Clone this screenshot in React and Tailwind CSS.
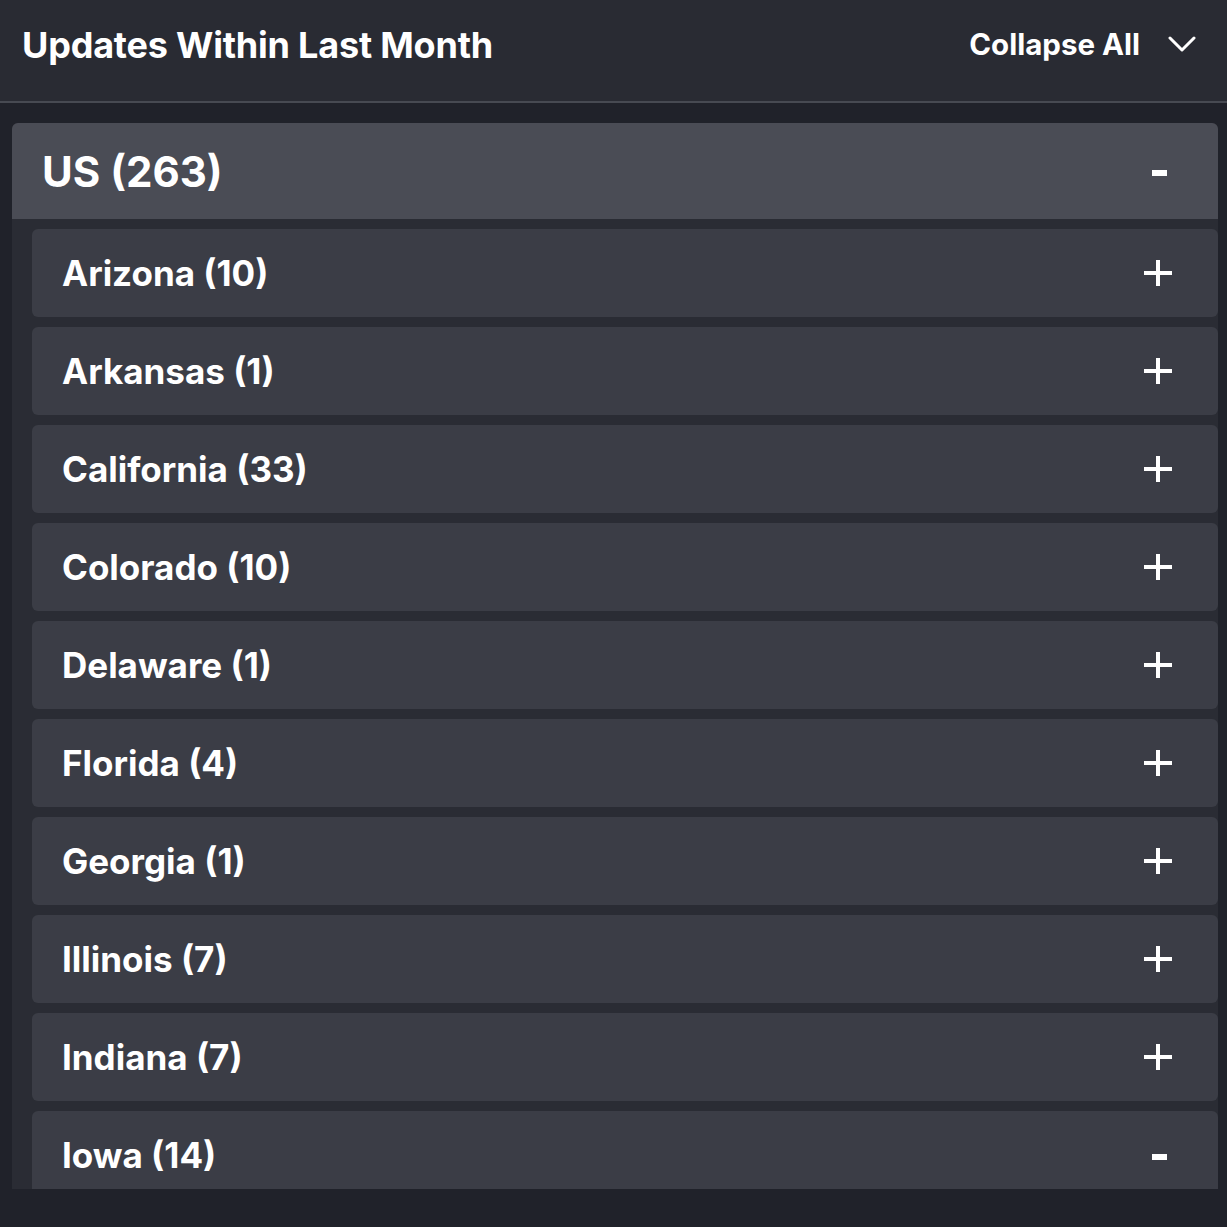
const states = [
  { name: 'Arizona', count: 10 },
  { name: 'Arkansas', count: 1 },
  { name: 'California', count: 33 },
  { name: 'Colorado', count: 10 },
  { name: 'Delaware', count: 1 },
  { name: 'Florida', count: 4 },
  { name: 'Georgia', count: 1 },
  { name: 'Illinois', count: 7 },
  { name: 'Indiana', count: 7 },
  { name: 'Iowa', count: 14, open: true },
];

const Plus = () => (
  <div className="relative w-[28px] h-[26px]">
    <div className="absolute left-0 right-0 top-[11px] h-[4px] bg-white" />
    <div className="absolute top-0 bottom-0 left-[12px] w-[4px] bg-white" />
  </div>
);

const Minus = () => (
  <div className="w-[28px] flex justify-end pr-[5px]">
    <div className="w-[15px] h-[6px] bg-white mt-[4px]" />
  </div>
);

const Chevron = () => (
  <svg width="28" height="17" viewBox="0 0 28 17" fill="none">
    <polyline points="2,2 14,14 26,2" stroke="white" strokeWidth="3" strokeLinecap="round" strokeLinejoin="round" />
  </svg>
);

const App = () => {
  return (
    <div
      className="w-[1227px] h-[1227px] bg-[#20222a] text-white overflow-hidden"
      style={{ fontFamily: 'Inter, "Liberation Sans", sans-serif' }}
    >
      <header className="h-[103px] bg-[#292b33] border-b-2 border-[#474a52] flex items-center justify-between pl-[22px] pr-[31px]">
        <h1 className="text-[36px] font-bold tracking-[-0.2px] -mt-[12px]">Updates Within Last Month</h1>
        <button className="flex items-center gap-[28px] -mt-[12px]">
          <span className="text-[29.5px] font-bold">Collapse All</span>
          <Chevron />
        </button>
      </header>

      <div className="pt-[20px] pl-[12px] pr-[9px]">
        <div className="h-[1066px] overflow-hidden rounded-t-[6px] bg-[#2a2c34]">
          <div className="h-[96px] bg-[#4a4c55] flex items-center justify-between pl-[30px] pr-[46px]">
            <span className="text-[42px] font-bold">US (263)</span>
            <Minus />
          </div>
          <div className="flex flex-col gap-[10px] pt-[10px] pl-[20px]">
            {states.map((s) => (
              <div
                key={s.name}
                className="h-[88px] shrink-0 bg-[#3b3d46] rounded-[6px] flex items-center justify-between pl-[30px] pr-[46px]"
              >
                <span className="text-[35px] font-bold">{s.name} ({s.count})</span>
                {s.open ? <Minus /> : <Plus />}
              </div>
            ))}
          </div>
        </div>
      </div>
    </div>
  );
};

export default App;
